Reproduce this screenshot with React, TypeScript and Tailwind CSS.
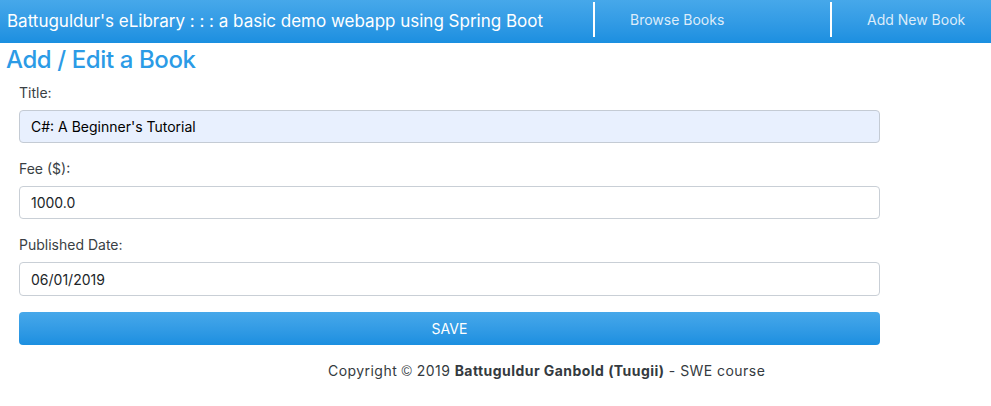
export default function App() {
  return (
    <div className="min-h-[406px] bg-white font-['Inter',sans-serif] text-[#212529]">
      <nav className="flex h-[43px] bg-gradient-to-b from-[#46a8ea] to-[#1b8fe0] text-white">
        <div className="flex w-[593px] items-center pl-[7px] text-[17px]">
          Battuguldur's eLibrary : : : a basic demo webapp using Spring Boot
        </div>
        <div className="my-[2px] mb-[6px] w-[237px] border-l-2 border-white pl-[35px] flex items-center text-[14px] text-[#dcecfa]">
          Browse Books
        </div>
        <div className="my-[2px] mb-[6px] flex-1 border-l-2 border-white pl-[35px] flex items-center text-[14px] text-[#dcecfa]">
          Add New Book
        </div>
      </nav>

      <h1 className="pl-[6px] pt-[2px] text-[24px] leading-[30px] font-medium tracking-[-0.4px] text-[#2b9be6]">
        Add / Edit a Book
      </h1>

      <form className="ml-[19px] w-[861px] pt-[8px]">
        <label className="block text-[14px] leading-[20px] text-[#3a3f44]">Title:</label>
        <input
          readOnly
          value="C#: A Beginner's Tutorial"
          className="mt-[7px] block h-[33px] w-full rounded-[4px] border border-[#c4cbd4] bg-[#e8f0fe] px-[11px] text-[14px] text-black"
        />

        <label className="mt-[16px] block text-[14px] leading-[20px] text-[#3a3f44]">Fee ($):</label>
        <input
          readOnly
          value="1000.0"
          className="mt-[7px] block h-[33px] w-full rounded-[4px] border border-[#c9cfd6] bg-white px-[11px] text-[14px] text-[#212529]"
        />

        <label className="mt-[16px] block text-[14px] leading-[20px] text-[#3a3f44]">Published Date:</label>
        <input
          readOnly
          value="06/01/2019"
          className="mt-[7px] block h-[34px] w-full rounded-[4px] border border-[#c9cfd6] bg-white px-[11px] text-[14px] text-[#212529]"
        />

        <button
          type="button"
          className="mt-[16px] block h-[33px] w-full rounded-[4px] bg-gradient-to-b from-[#46a8ea] to-[#1b8fe0] text-[14px] text-white"
        >
          SAVE
        </button>
      </form>

      <footer className="mt-[16px] pl-[328px] text-[14px] leading-[20px] tracking-[0.45px] text-[#343a40]">
        Copyright <span className="font-['Liberation_Sans',sans-serif]">©</span> 2019{" "}
        <b>Battuguldur Ganbold (Tuugii)</b> - SWE course
      </footer>
    </div>
  );
}
